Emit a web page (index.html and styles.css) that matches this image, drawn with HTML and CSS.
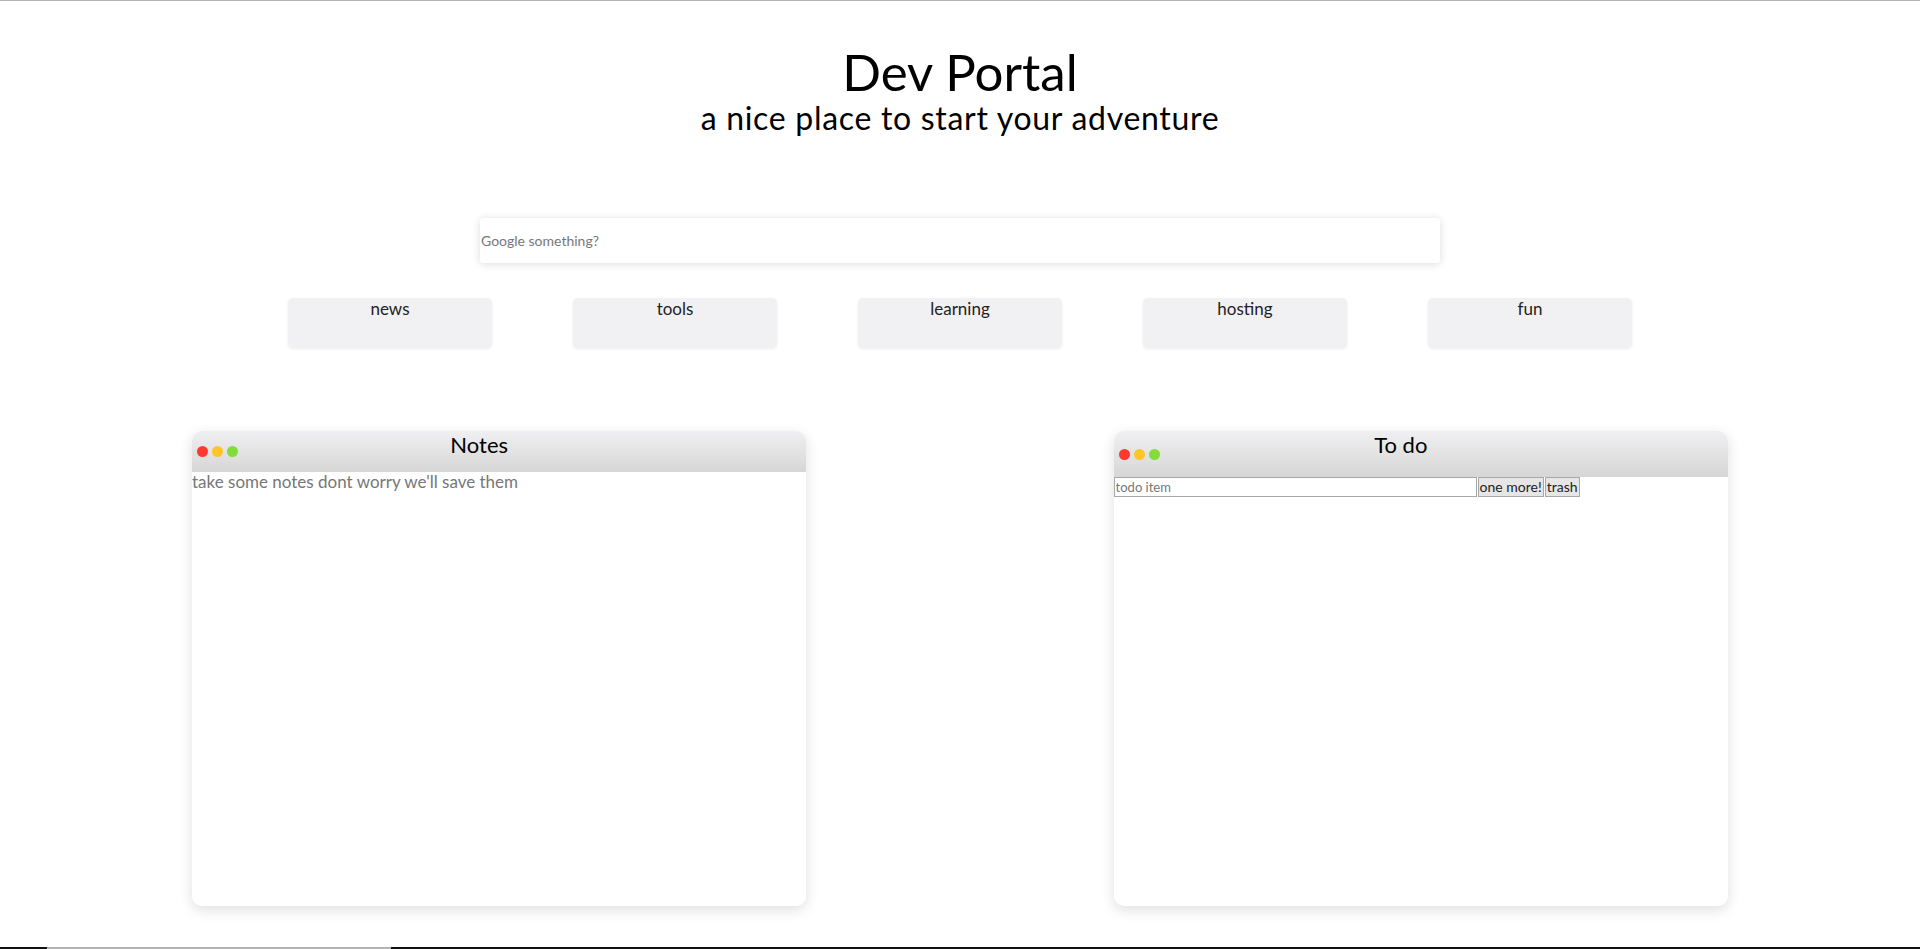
FILE: index.html
```html
<!DOCTYPE html>
<html lang="en">
<head>
<meta charset="utf-8">
<title>Dev Portal</title>
<link rel="stylesheet" href="styles.css">
</head>
<body>
<div class="page">
  <header class="hero">
    <h1 class="title">Dev Portal</h1>
    <h2 class="subtitle">a nice place to start your adventure</h2>
  </header>

  <div class="search-wrap">
    <input class="search" type="text" placeholder="Google something?">
  </div>

  <nav class="cats">
    <div class="cat">news</div>
    <div class="cat">tools</div>
    <div class="cat">learning</div>
    <div class="cat">hosting</div>
    <div class="cat">fun</div>
  </nav>

  <section class="windows">
    <div class="window">
      <div class="bar bar-notes">
        <div class="dots"><span class="dot red"></span><span class="dot yellow"></span><span class="dot green"></span></div>
        <div class="bar-title">Notes</div>
      </div>
      <textarea class="notes" placeholder="take some notes dont worry we'll save them"></textarea>
    </div>

    <div class="window">
      <div class="bar bar-todo">
        <div class="dots dots-todo"><span class="dot red"></span><span class="dot yellow"></span><span class="dot green"></span></div>
        <div class="bar-title">To do</div>
      </div>
      <div class="todo-row">
        <input class="todo-input" type="text" placeholder="todo item">
        <button class="todo-btn">one more!</button>
        <button class="todo-btn">trash</button>
      </div>
    </div>
  </section>
</div>
<div class="bottom-line"><span class="seg-a"></span><span class="seg-b"></span><span class="seg-c"></span></div>
</body>
</html>
```

FILE: styles.css
```css
* { box-sizing: border-box; }

html, body {
  margin: 0;
  padding: 0;
  background: #ffffff;
  height: 100%;
  overflow: hidden;
}

body {
  font-family: Lato, "Open Sans", sans-serif;
  color: #000;
  border-top: 1px solid #b3b3b3;
}

.page {
  display: flex;
  flex-direction: column;
  align-items: center;
}

.hero {
  text-align: center;
  padding-top: 43px;
}

.title {
  margin: 0;
  font-size: 51px;
  font-weight: 400;
  line-height: 56px;
  letter-spacing: 0;
}

.subtitle {
  margin: 0;
  font-size: 32px;
  font-weight: 400;
  line-height: 36px;
  letter-spacing: 0.7px;
}

.search-wrap {
  width: 50%;
  margin-top: 82px;
}

.search {
  display: block;
  width: 100%;
  height: 45px;
  border: none;
  border-radius: 3px;
  box-shadow: 0 1px 8px rgba(0, 0, 0, 0.14);
  padding: 0 1px;
  font-family: Lato, sans-serif;
  font-size: 14px;
  color: #333;
  outline: none;
  background: #fff;
}

.search::placeholder { color: #777; }

.cats {
  width: 70%;
  margin-top: 35px;
  display: flex;
  justify-content: space-between;
}

.cat {
  width: 204px;
  height: 50px;
  background: #f1f1f3;
  border-radius: 5px;
  box-shadow: 0 1px 3px rgba(0, 0, 0, 0.08);
  text-align: center;
  font-size: 17px;
  line-height: 20px;
  color: #222;
  padding-top: 1px;
}

.windows {
  width: 80%;
  margin-top: 83px;
  display: flex;
  justify-content: space-between;
}

.window {
  width: 40%;
  height: 475px;
  background: #fff;
  border-radius: 10px;
  box-shadow: 0 4px 14px rgba(0, 0, 0, 0.13);
  overflow: hidden;
  display: flex;
  flex-direction: column;
}

.bar {
  position: relative;
  background: linear-gradient(to bottom, #f0f0f2, #d6d6d6);
  flex: none;
}

.bar-notes { height: 41px; }
.bar-todo { height: 46px; }

.bar-title {
  text-align: center;
  font-size: 22px;
  line-height: 28px;
  padding-top: 0;
  padding-right: 40px;
}

.dots {
  position: absolute;
  left: 5px;
  top: 15px;
  display: flex;
  gap: 4px;
}

.dots-todo { left: 5px; top: 18px; }

.dot {
  width: 11px;
  height: 11px;
  border-radius: 50%;
  display: block;
}

.red { background: #fc3a2e; }
.yellow { background: #fec529; }
.green { background: #82dc3a; }

.notes {
  flex: 1;
  width: 100%;
  border: none;
  outline: none;
  resize: none;
  padding: 0;
  font-family: Lato, sans-serif;
  font-size: 17px;
  line-height: 20px;
  color: #333;
}

.notes::placeholder { color: #777; }

.todo-row {
  display: flex;
  align-items: stretch;
  height: 20px;
}

.todo-input {
  width: 363px;
  height: 20px;
  border: 1px solid #a8a8a8;
  padding: 0 1px;
  font-family: Lato, sans-serif;
  font-size: 13px;
  outline: none;
}

.todo-input::placeholder { color: #777; }

.todo-btn {
  height: 20px;
  padding: 0 1px;
  margin: 0 0 0 1px;
  border: 1px solid #a8a8a8;
  background: #e6e6e6;
  font-family: Lato, sans-serif;
  font-size: 14px;
  line-height: 16px;
  color: #222;
}

.bottom-line {
  position: fixed;
  left: 0;
  right: 0;
  bottom: 0;
  height: 2px;
  display: flex;
}

.seg-a { width: 47px; background: #111; }
.seg-b { width: 344px; background: #b3b3b3; }
.seg-c { flex: 1; background: #111; }
```
